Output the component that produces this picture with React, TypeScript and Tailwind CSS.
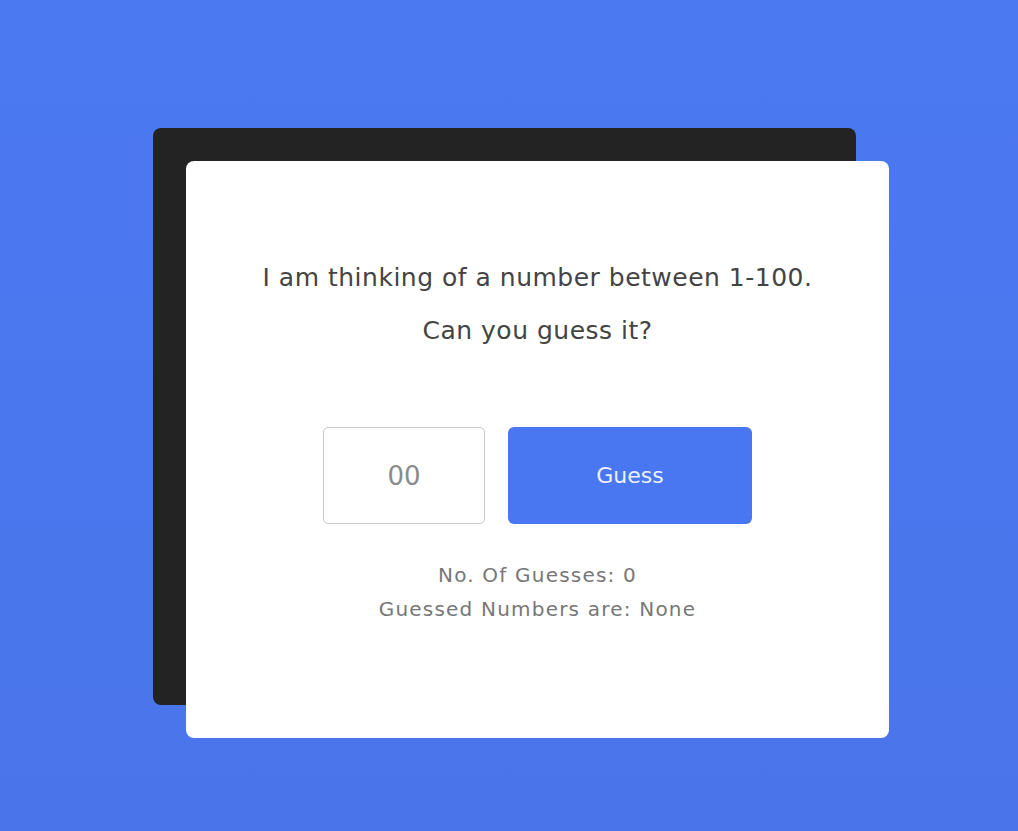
import { useState } from "react";

const App = () => {
  const [value, setValue] = useState("");
  const [guesses] = useState<number[]>([]);

  return (
    <div className="min-h-screen w-full bg-gradient-to-b from-[#4b79f2] to-[#4a75ea] pt-[161px] pl-[186px] font-['DejaVu_Sans',sans-serif]">
      {/* white card, the dark panel behind it is an offset shadow */}
      <div className="w-[703px] h-[577px] bg-white rounded-lg shadow-[-33px_-33px_0_0_#232323] flex flex-col items-center pt-[99px]">
        <p className="text-[25px] leading-[36px] tracking-[0.5px] text-[#444]">
          I am thinking of a number between 1-100.
        </p>
        <p className="mt-[17px] text-[25px] leading-[36px] tracking-[0.5px] text-[#444]">
          Can you guess it?
        </p>

        <div className="mt-[78px] flex gap-[23px]">
          <input
            type="text"
            value={value}
            onChange={(e) => setValue(e.target.value)}
            placeholder="00"
            className="w-[162px] h-[97px] border border-[#c8c8c8] rounded-[5px] text-center text-[26px] text-[#555] placeholder:text-[#8a8a8a] outline-none"
          />
          <button className="w-[244px] h-[97px] bg-[#4877f1] rounded-[6px] text-white/90 text-[22px]">
            Guess
          </button>
        </div>

        <p className="mt-[34px] text-[20px] leading-[34px] tracking-[1.2px] text-[#777]">
          No. Of Guesses: {guesses.length}
        </p>
        <p className="text-[20px] leading-[34px] tracking-[1.2px] text-[#777]">
          Guessed Numbers are: {guesses.length ? guesses.join(", ") : "None"}
        </p>
      </div>
    </div>
  );
};

export default App;
